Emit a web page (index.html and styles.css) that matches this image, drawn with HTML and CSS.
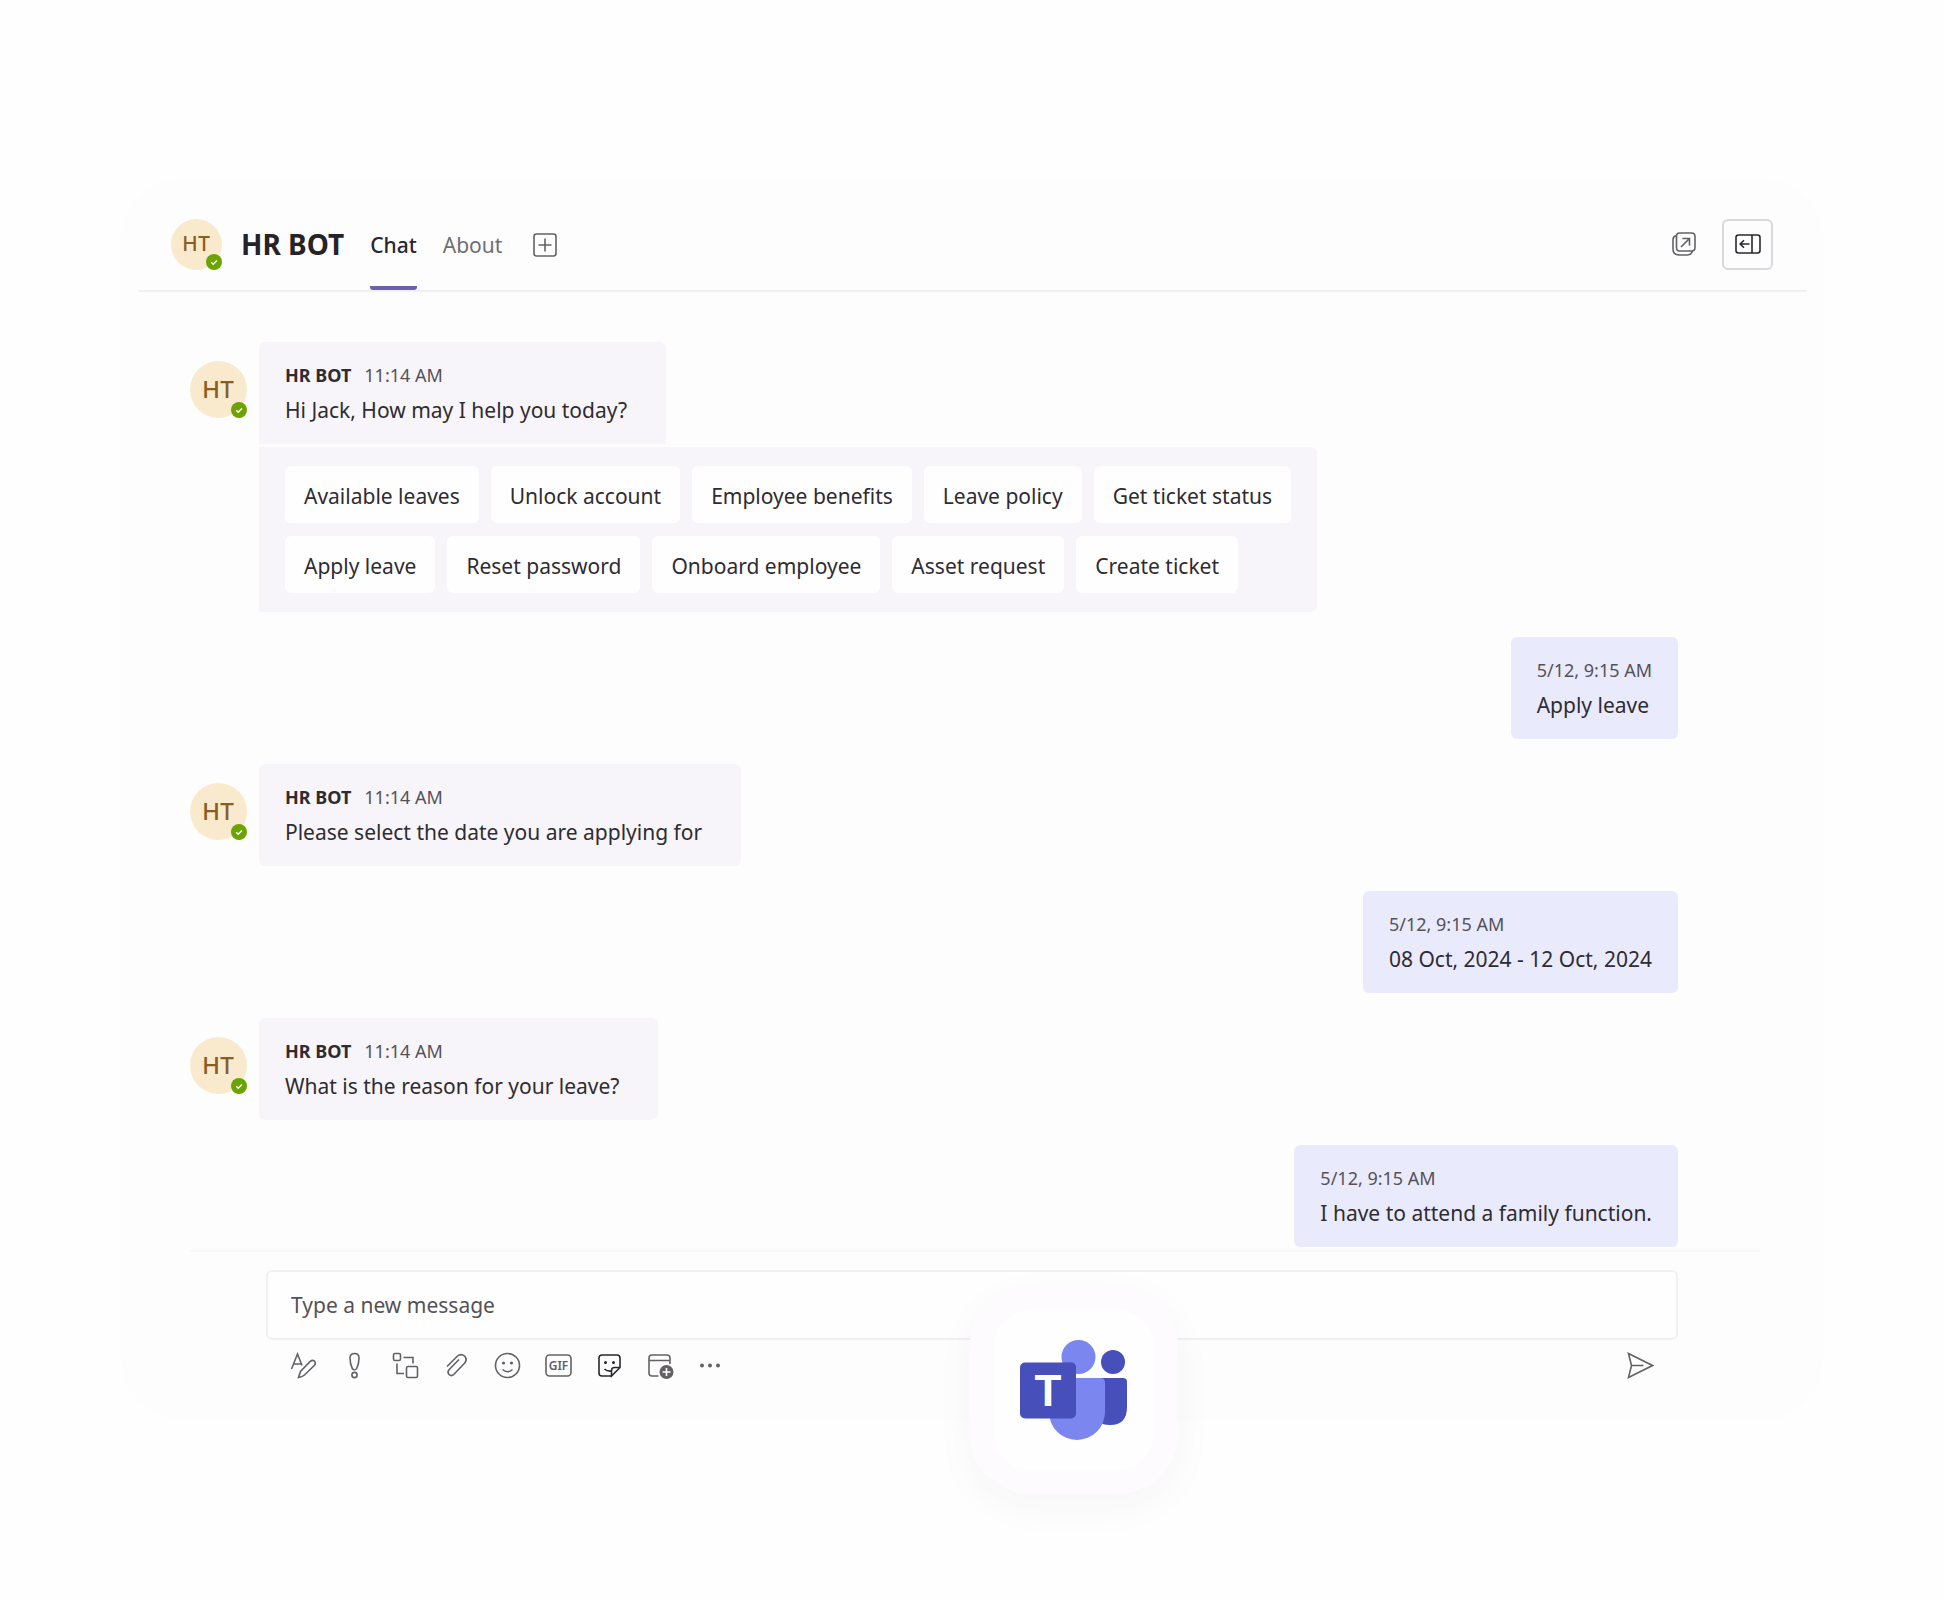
FILE: index.html
```html
<!DOCTYPE html>
<html lang="en">
<head>
  <meta charset="UTF-8">
  <title>HR BOT</title>
  <link rel="stylesheet" href="styles.css">
</head>
<body>
  <!-- shared shapes -->
  <svg class="defs" aria-hidden="true">
    <symbol id="check" viewBox="0 0 16 16">
      <circle cx="8" cy="8" r="8" fill="#6ba300"/>
      <path d="M5.2 8.3l2 1.9 3.7-3.8" fill="none" stroke="#fff" stroke-width="1.5"/>
    </symbol>
  </svg>

  <main class="card">
    <header class="header">
      <div class="avatar small">HT<svg class="status"><use href="#check"/></svg></div>
      <h1>HR BOT</h1>
      <nav class="tabs">
        <a class="tab active" href="#chat">Chat</a>
        <a class="tab" href="#about">About</a>
      </nav>
      <button class="icon-btn add" aria-label="Add tab">
        <svg width="24" height="24" viewBox="0 0 24 24"><rect x="1" y="1" width="22" height="22" rx="2.5"/><path d="M12 5.500v13M5.500 12h13"/></svg>
      </button>
      <div class="actions">
        <button class="icon-btn" aria-label="Pop out">
          <svg width="24" height="24" viewBox="0 0 24 24"><path d="M7.500 1h12q3.500 0 3.500 3.500v11q0 3.500-3.500 3.500h-12Q4.500 19 4.500 15.500v-11Q4.500 1 7.500 1z"/><path d="M4.500 3.500Q1 4.500 1 7.500V17q0 6 6 6h8.500q3.500 0 5-4"/><path d="M9 15l8.500-8.500M10.500 6.500h7v7"/></svg>
        </button>
        <button class="icon-btn boxed" aria-label="Open side panel">
          <svg width="26" height="20" viewBox="0 0 26 20"><rect x="1" y="1" width="24" height="18" rx="2.5"/><path d="M17 1v18M5.500 10h9M9 6.200L5.200 10 9 13.800"/></svg>
        </button>
      </div>
    </header>

    <section class="chat" id="chat">
      <div class="row">
        <div class="avatar">HT<svg class="status"><use href="#check"/></svg></div>
        <div class="stack">
          <div class="bubble bot">
            <p class="meta"><b>HR BOT</b><span>11:14 AM</span></p>
            <p class="text">Hi Jack, How may I help you today?</p>
          </div>
          <div class="options">
            <div class="option-row">
              <button class="option">Available leaves</button>
              <button class="option">Unlock account</button>
              <button class="option">Employee benefits</button>
              <button class="option">Leave policy</button>
              <button class="option">Get ticket status</button>
            </div>
            <div class="option-row">
              <button class="option">Apply leave</button>
              <button class="option">Reset password</button>
              <button class="option">Onboard employee</button>
              <button class="option">Asset request</button>
              <button class="option">Create ticket</button>
            </div>
          </div>
        </div>
      </div>

      <div class="row me">
        <div class="bubble">
          <p class="meta"><span>5/12, 9:15 AM</span></p>
          <p class="text">Apply leave</p>
        </div>
      </div>

      <div class="row">
        <div class="avatar">HT<svg class="status"><use href="#check"/></svg></div>
        <div class="bubble bot">
          <p class="meta"><b>HR BOT</b><span>11:14 AM</span></p>
          <p class="text">Please select the date you are applying for</p>
        </div>
      </div>

      <div class="row me">
        <div class="bubble">
          <p class="meta"><span>5/12, 9:15 AM</span></p>
          <p class="text">08 Oct, 2024 - 12 Oct, 2024</p>
        </div>
      </div>

      <div class="row">
        <div class="avatar">HT<svg class="status"><use href="#check"/></svg></div>
        <div class="bubble bot">
          <p class="meta"><b>HR BOT</b><span>11:14 AM</span></p>
          <p class="text">What is the reason for your leave?</p>
        </div>
      </div>

      <div class="row me">
        <div class="bubble">
          <p class="meta"><span>5/12, 9:15 AM</span></p>
          <p class="text">I have to attend a family function.</p>
        </div>
      </div>
    </section>

    <form class="composer">
      <input class="message" type="text" placeholder="Type a new message" aria-label="Type a new message">
      <div class="toolbar">
        <button type="button" class="icon-btn" aria-label="Format">
          <svg width="27" height="27" viewBox="0 0 27 27"><path d="M1.500 17L7.500 2l4.500 11.500M3.500 12h8"/><path d="M8.500 25.500l2-6L20.500 9.200q2-1.700 4 0 1.700 2 0 4L14.500 23q-2.500 2-6 2.500z"/></svg>
        </button>
        <button type="button" class="icon-btn" aria-label="Set delivery options">
          <svg width="27" height="27" viewBox="0 0 27 27"><path d="M13.500 1.500q4.500 0 4.500 4.500 0 6-2.300 10.500-.7 1.300-2.200 1.300t-2.200-1.300Q9 12 9 6q0-4.500 4.500-4.500z"/><circle cx="13.500" cy="23" r="2.600"/></svg>
        </button>
        <button type="button" class="icon-btn" aria-label="Loop components">
          <svg width="27" height="27" viewBox="0 0 27 27"><rect x="1.500" y="1.500" width="7" height="7" rx="1.500"/><rect x="14.500" y="14.500" width="11" height="11" rx="1.500"/><path d="M11.500 5.500H21v6M5 11.500v10h7"/></svg>
        </button>
        <button type="button" class="icon-btn" aria-label="Attach">
          <svg width="27" height="27" viewBox="0 0 27 27"><path d="M4 14.500L14.500 4q3.500-2.800 7 0 3.200 3.500 0 7.200L10.500 22.700q-2.200 1.800-4.500-.2-2-2.300 0-4.700L16 7.500"/></svg>
        </button>
        <button type="button" class="icon-btn" aria-label="Emoji">
          <svg width="27" height="27" viewBox="0 0 27 27"><circle cx="13.500" cy="13.500" r="12"/><path d="M8.500 17.500q5 4.500 10 0"/><circle class="dot" cx="9.500" cy="11" r="1.600"/><circle class="dot" cx="17.500" cy="11" r="1.600"/></svg>
        </button>
        <button type="button" class="icon-btn" aria-label="GIF">
          <svg width="27" height="27" viewBox="0 0 27 27"><rect x="1" y="3" width="25" height="21" rx="3.500"/><text x="13.500" y="18" text-anchor="middle">GIF</text></svg>
        </button>
        <button type="button" class="icon-btn dark" aria-label="Sticker">
          <svg width="27" height="27" viewBox="0 0 27 27"><path d="M15.500 24H6q-3 0-3-3V6q0-3 3-3h15q3 0 3 3v9.500L15.500 24v-5.500q0-3 3-3H24"/><path d="M8.500 17q2.500 2.500 7 2"/><circle class="dot" cx="9.500" cy="10.500" r="1.500"/><circle class="dot" cx="17.500" cy="10.500" r="1.500"/></svg>
        </button>
        <button type="button" class="icon-btn" aria-label="Schedule">
          <svg width="27" height="27" viewBox="0 0 27 27"><path d="M11.500 24H5q-3 0-3-3V6q0-3 3-3h15q3 0 3 3v6M2 8.500h21"/><circle class="dot" cx="19.500" cy="20" r="7"/><path class="plus" d="M19.500 16v8M15.500 20h8"/></svg>
        </button>
        <button type="button" class="icon-btn" aria-label="More">
          <svg width="27" height="27" viewBox="0 0 27 27"><circle class="dot" cx="4" cy="13.500" r="2"/><circle class="dot" cx="12" cy="13.500" r="2"/><circle class="dot" cx="20" cy="13.500" r="2"/></svg>
        </button>
        <button type="submit" class="icon-btn send" aria-label="Send">
          <svg width="27" height="27" viewBox="0 0 27 27"><path d="M1.500 1.500l24 12-24 12 3-12zM4.500 13.500h12"/></svg>
        </button>
      </div>
    </form>

    <div class="teams">
      <div class="teams-inner">
        <svg width="108" height="101" viewBox="0 0 108 101" role="img" aria-label="Teams">
          <circle cx="93" cy="22" r="12" fill="#474fba"/>
          <path d="M80 38h23q4 0 4 4v25q0 18-17 18-8 0-10-3z" fill="#474fba"/>
          <circle cx="58.500" cy="17" r="17" fill="#7b86ef"/>
          <path d="M30 38h51q4 0 4 5v29a28 28 0 0 1-56 0z" fill="#7b86ef"/>
          <path d="M42 22.500h9q5 0 5 5V34q-9 0-14-11.500z" fill="#5b64cf"/>
          <rect x="0" y="22.500" width="56" height="56" rx="5" fill="#474fba"/>
          <text x="28" y="66">T</text>
        </svg>
      </div>
    </div>
  </main>
</body>
</html>
```

FILE: styles.css
```css
* {
  box-sizing: border-box;
}

body {
  margin: 0;
  padding: 178px 121px;
  background-color: #fefefe;
  color: #2e2c31;
  font-family: "Noto Sans", "Segoe UI", sans-serif;
  font-size: 21px;
}

h1, p {
  margin: 0;
}

button, input {
  font: inherit;
  color: inherit;
}

.defs {
  position: absolute;
  width: 0;
  height: 0;
}

.card {
  position: relative;
  padding: 0 16px 42px 18px;
  border-radius: 64px;
  background-color: #fdfdfd;
}

/* header */
.header {
  display: flex;
  align-items: center;
  height: 114px;
  padding: 20px 34px 0 32px;
  border-bottom: 2px solid #f0eff1;
}

.header h1 {
  margin: 0 26px 0 19px;
  color: #252327;
  font-size: 28px;
  line-height: 36px;
}

.tabs {
  display: flex;
  align-self: stretch;
  gap: 26px;
}

.tab {
  display: flex;
  align-items: center;
  padding-top: 6px;
  border-bottom: 4px solid transparent;
  color: #706e73;
  text-decoration: none;
}

.tab.active {
  border-radius: 3px;
  border-bottom-color: #6a61ae;
  color: #29272b;
  font-weight: 500;
}

.add {
  margin: 2px 0 0 31px;
}

.actions {
  display: flex;
  align-items: center;
  gap: 26px;
  margin-left: auto;
}

.icon-btn {
  display: flex;
  align-items: center;
  justify-content: center;
  padding: 0;
  border: 0;
  background: none;
  color: #636165;
}

.icon-btn svg {
  fill: none;
  stroke: currentColor;
  stroke-width: 1.6;
}

.icon-btn .dot {
  fill: currentColor;
  stroke: none;
}

.icon-btn .plus {
  stroke: #fff;
}

.icon-btn text {
  fill: currentColor;
  stroke: none;
  font-size: 12px;
  font-weight: 600;
}

.icon-btn.dark,
.icon-btn.boxed {
  color: #29272b;
}

.icon-btn.boxed {
  width: 51px;
  height: 51px;
  border: 2px solid #d9d8dd;
  border-radius: 6px;
}

/* avatars */
.avatar {
  position: relative;
  display: flex;
  flex: none;
  align-items: center;
  justify-content: center;
  width: 57px;
  height: 57px;
  border-radius: 50%;
  background-color: #faeacd;
  color: #8a5d20;
  font-family: Inter, sans-serif;
  font-size: 23px;
  font-weight: 500;
}

.avatar.small {
  width: 51px;
  height: 51px;
  font-size: 20px;
}

.status {
  position: absolute;
  right: 0;
  bottom: 0;
  width: 16px;
  height: 16px;
}

/* messages */
.chat {
  display: flex;
  flex-direction: column;
  gap: 25px;
  padding: 50px 129px 0 51px;
}

.row {
  display: flex;
  align-items: flex-start;
  gap: 12px;
}

.row.me {
  justify-content: flex-end;
}

.row .avatar {
  margin-top: 19px;
}

.stack {
  display: flex;
  flex-direction: column;
  align-items: flex-start;
  gap: 3px;
}

.bubble {
  padding: 16px 26px 17px;
  border-radius: 6px;
  background-color: #eaeafd;
}

.bubble.bot {
  padding-right: 39px;
  background-color: #f7f5f9;
}

.stack .bubble {
  border-radius: 6px 6px 0 0;
}

.meta {
  display: flex;
  gap: 13px;
  font-size: 18px;
  line-height: 35px;
}

.meta span {
  color: #545259;
}

.text {
  line-height: 34px;
}

.options {
  display: flex;
  flex-direction: column;
  gap: 13px;
  padding: 19px 26px;
  border-radius: 0 6px 6px 0;
  background-color: #f7f5f9;
}

.option-row {
  display: flex;
  gap: 12px;
}

.option {
  height: 57px;
  padding: 2px 19px 0;
  border: 0;
  border-radius: 6px;
  background-color: #fefefe;
}

/* message box */
.composer {
  margin: 3px 47px 0 51px;
  padding: 18px 82px 0 76px;
  border-top: 2px solid #faf8fb;
}

.message {
  display: block;
  width: 100%;
  height: 70px;
  padding: 0 23px;
  border: 2px solid #f1eff3;
  border-radius: 6px;
  background-color: #fefefe;
}

.message::placeholder {
  color: #545255;
  opacity: 1;
}

.toolbar {
  display: flex;
  gap: 24px;
  padding: 12px 24px 0;
}

.send {
  margin-left: auto;
}

/* app badge over the lower edge */
.teams {
  position: absolute;
  left: 56%;
  bottom: -73px;
  width: 208px;
  height: 208px;
  margin-left: -104px;
  padding: 24px;
  border-radius: 60px;
  background-color: #fdfbfd;
  box-shadow: 0 12px 40px rgba(60, 50, 80, 0.04);
}

.teams-inner {
  display: flex;
  align-items: center;
  justify-content: center;
  height: 100%;
  border-radius: 36px;
  background-color: #fefefe;
}

.teams text {
  fill: #fff;
  font-family: "Liberation Sans", Arial, sans-serif;
  font-size: 44px;
  font-weight: bold;
  text-anchor: middle;
}
```
